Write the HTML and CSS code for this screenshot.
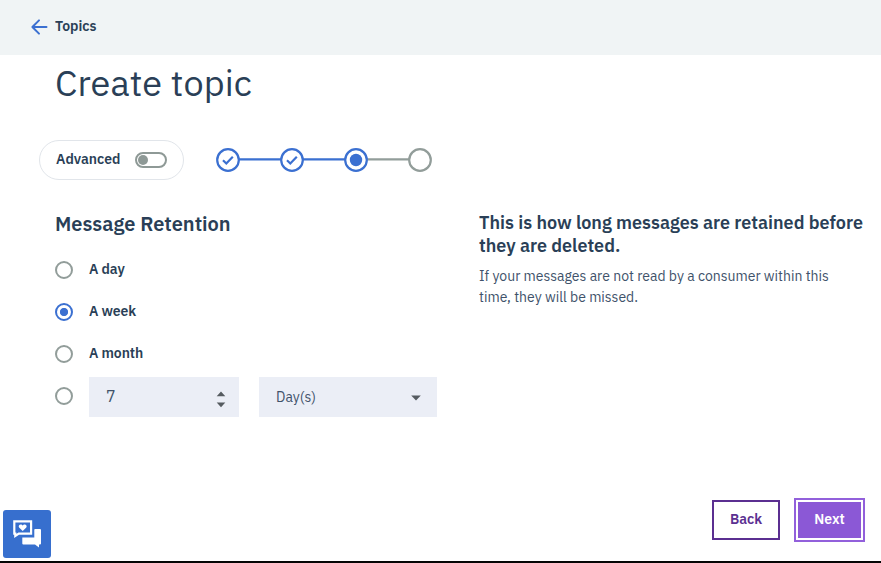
FILE: index.html
```html
<!DOCTYPE html>
<html lang="en">
<head>
<meta charset="utf-8">
<title>Create topic</title>
<link rel="stylesheet" href="styles.css">
</head>
<body>
<div class="page">
  <header class="topbar">
    <svg class="arrow" width="18" height="18" viewBox="0 0 18 18"><path d="M16.5 9H2.500M9 2.400L2.400 9 9 15.600"/></svg>
    <a class="crumb">Topics</a>
  </header>
  <h1 class="title">Create topic</h1>
  <div class="progress-row">
    <div class="pill"><span class="pill-label">Advanced</span><span class="toggle"></span></div>
    <svg class="steps" width="218" height="26" viewBox="0 0 218 26">
      <path class="done" d="M24 12.3H66M88 12.3H130"/>
      <path class="todo" d="M152 12.3H194"/>
      <g class="done"><circle cx="13" cy="13" r="10.8"/><circle cx="77" cy="13" r="10.8"/><circle cx="141" cy="13" r="10.8"/>
      <path d="M8 13.3l3.3 3.2 6.5-6.8M72 13.3l3.3 3.2 6.5-6.8"/></g>
      <circle class="dot" cx="141" cy="13" r="6.2"/>
      <circle class="todo" cx="205" cy="13" r="10.8"/>
    </svg>
  </div>
  <main class="content">
    <section class="form">
      <h2 class="form-title">Message Retention</h2>
      <label class="option"><i class="radio"></i><span>A day</span></label>
      <label class="option"><i class="radio checked"></i><span>A week</span></label>
      <label class="option"><i class="radio"></i><span>A month</span></label>
      <div class="option custom">
        <i class="radio"></i>
        <div class="field number"><span>7</span><svg width="10" height="18" viewBox="0 0 10 18"><path d="M.7 6.3L5 1.5l4.3 4.8zM.7 12.5h8.6L5 17.3z"/></svg></div>
        <div class="field select"><span>Day(s)</span><svg width="10" height="6" viewBox="0 0 10 6"><path d="M.2.5h9.6L5 5.5z"/></svg></div>
      </div>
    </section>
    <aside class="help">
      <h3>This is how long messages are retained before<br>they are deleted.</h3>
      <p>If your messages are not read by a consumer within this<br>time, they will be missed.</p>
    </aside>
  </main>
  <footer class="actions">
    <button class="back">Back</button>
    <button class="next">Next</button>
  </footer>
  <div class="chat">
    <svg width="48" height="48" viewBox="0 0 48 48">
      <path class="solid" d="M32 19h5q1 0 1 1v13.500q0 1-1 1h-1v3l-4-3H20.300q-1 0-1-1v-6h12V20q0-1 .7-1z"/>
      <path class="bubble" d="M11.300 11.300h16.800v12.400H15.800L12.300 26v-2.300h-1z"/>
      <path class="solid" d="M19.700 21l-3.600-3.500c-1-1.500.1-3.100 1.600-3.100.9 0 1.600.5 2 1.200.4-.7 1.100-1.200 2-1.200 1.500 0 2.600 1.600 1.600 3.100z"/>
    </svg>
  </div>
</div>
</body>
</html>
```
FILE: styles.css
```css
* { box-sizing: border-box; }
body { margin: 0; background: #fff; color: #2a3f57; font-family: "IBM Plex Sans", Roboto, "Liberation Sans", sans-serif; font-size: 14px; }
h1, h2, h3, p { margin: 0; }
svg { display: block; fill: none; }
.page { position: relative; width: 881px; height: 563px; overflow: hidden; border-bottom: 2px solid #050505; display: flex; flex-direction: column; }
.topbar { height: 55px; flex: none; background: #f0f4f5; display: flex; align-items: center; padding: 0 0 1px 30px; }
.arrow { stroke: #3b70d1; stroke-width: 2; stroke-linecap: round; stroke-linejoin: round; }
.crumb { margin: 0 0 2px 7px; font-weight: 600; line-height: 20px; }
.title { height: 85px; padding: 5px 0 0 55px; font-size: 36px; letter-spacing: .1px; line-height: 46px; font-weight: 400; }
.progress-row { display: flex; align-items: center; height: 40px; padding-left: 39px; }
.pill { width: 145px; height: 40px; border: 1px solid #e1e5ea; border-radius: 20px; display: flex; align-items: center; padding: 0 16px; justify-content: space-between; font-weight: 600; }
.pill-label { margin-bottom: 2px; }
.toggle { width: 32px; height: 16px; border: 2px solid #8e9996; border-radius: 8px; padding: 1px; }
.toggle::before { content: ""; display: block; width: 10px; height: 10px; border-radius: 50%; background: #8e9996; }
.steps { margin-left: 31px; stroke-width: 2.2; }
.done { stroke: #3b70d1; }
.todo { stroke: #929d9a; }
.dot { fill: #3b70d1; }
.content { display: flex; height: 310px; }
.form { width: 479px; flex: none; padding-left: 55px; }
.form-title { padding-top: 30px; height: 69px; font-size: 20px; line-height: 28px; font-weight: 600; }
.option { display: flex; align-items: center; height: 42px; font-weight: 600; letter-spacing: -.1px; white-space: nowrap; }
.option > span { line-height: 20px; margin: 0 0 2px 16px; }
.radio { width: 18px; height: 18px; flex: none; border: 2px solid #929d9a; border-radius: 50%; }
.checked { border-color: #3b70d1; background: radial-gradient(circle, #3b70d1 3.7px, transparent 4.5px); }
.field { height: 40px; flex: none; display: flex; align-items: center; justify-content: space-between; background: #ebeef6; font-weight: 400; letter-spacing: 0; color: #40526a; }
.field svg { fill: #555b60; }
.number { width: 150px; margin: 2px 0 0 16px; padding: 0 13px 0 17px; }
.number span { font-size: 16px; padding-bottom: 2px; }
.number svg { margin-top: 4px; }
.select { width: 178px; margin: 2px 0 0 20px; padding: 0 16px 0 17px; }
.select svg { margin-top: 2px; }
.help { padding-top: 31px; white-space: nowrap; }
.help h3 { font-size: 18px; line-height: 23px; font-weight: 600; }
.help p { margin-top: 9px; line-height: 21px; color: #40526a; }
.actions { display: flex; align-items: center; justify-content: flex-end; gap: 14px; height: 44px; margin-top: 8px; padding-right: 16px; }
button { font: 600 14px "IBM Plex Sans", Roboto, sans-serif; padding: 0 0 3px; }
.back { width: 68px; height: 40px; border: 2px solid #5b2f91; background: #fff; color: #5b2f91; }
.next { width: 71px; height: 44px; border: 2px solid #9260db; background: #8b58d6; box-shadow: inset 0 0 0 2px #fff; color: #fff; }
.chat { position: absolute; left: 3px; top: 510px; width: 48px; height: 48px; border-radius: 3px; background: #376fce; }
.solid { fill: #fff; }
.bubble { fill: #376fce; stroke: #fff; stroke-width: 2.2; }
```
